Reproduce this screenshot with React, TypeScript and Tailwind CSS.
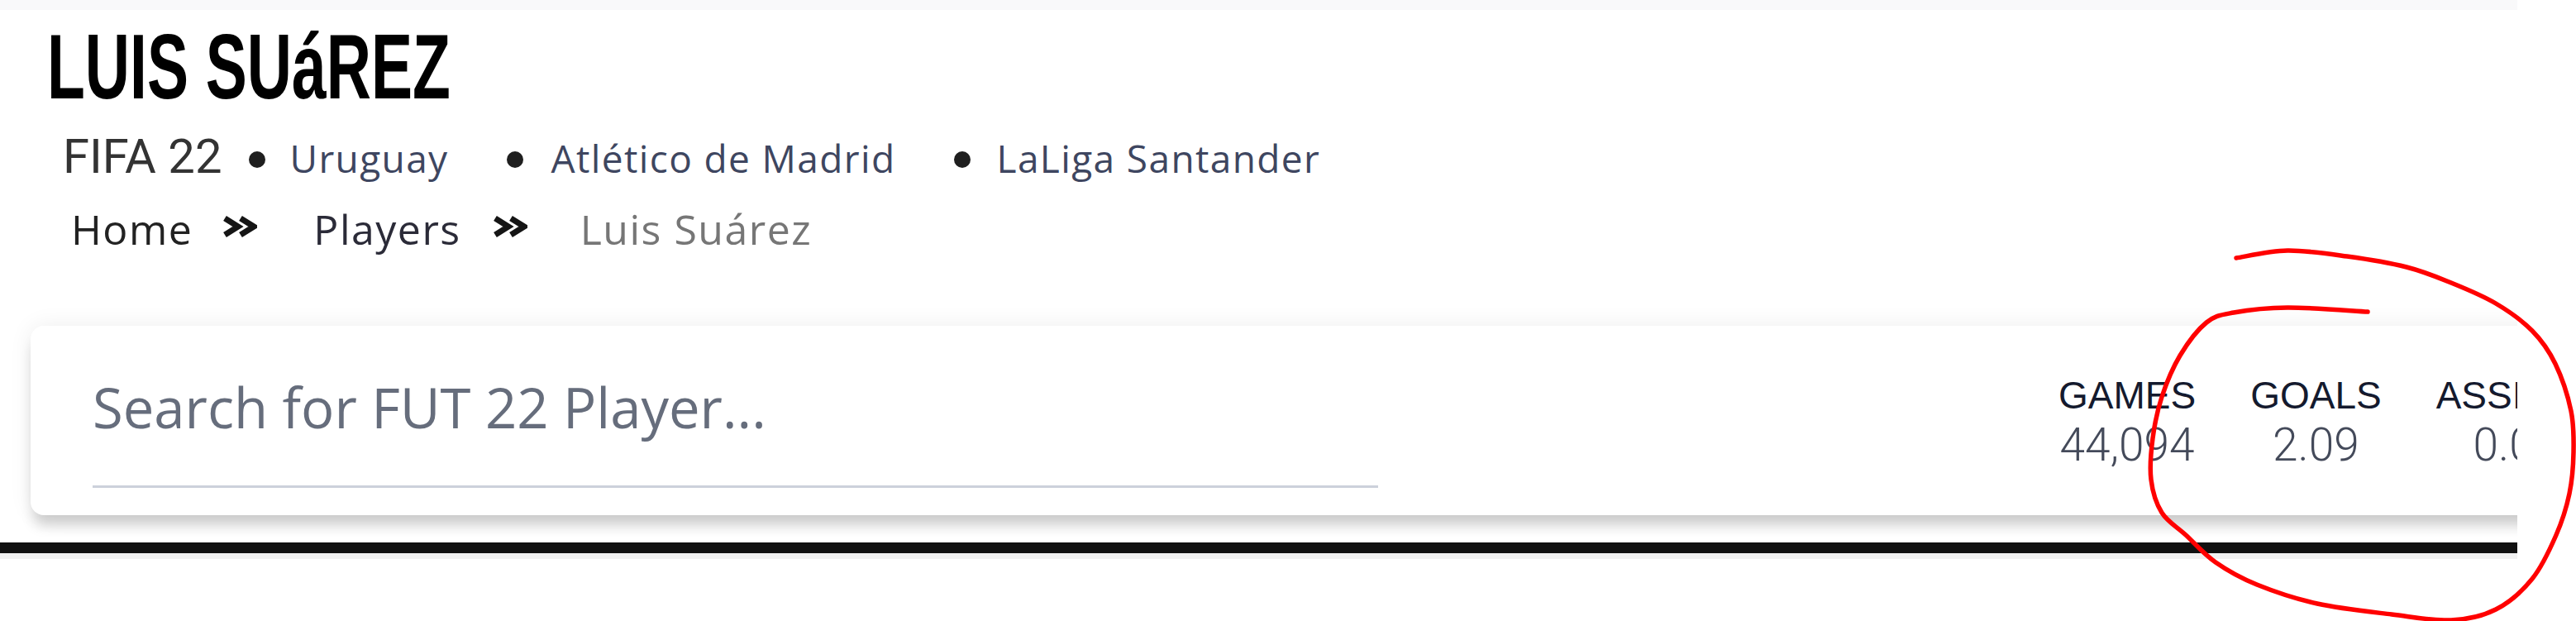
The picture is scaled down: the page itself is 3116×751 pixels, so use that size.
import React from "react"

const circle: [number, number][] = [
  [2705, 312], [2767, 303], [2839, 310], [2911, 323], [2965, 342], [3019, 367],
  [3063, 400], [3091, 440], [3110, 497], [3113, 547], [3108, 597], [3092, 647],
  [3063, 700], [3019, 737], [2965, 750], [2893, 743], [2803, 730], [2730, 707],
  [2680, 680], [2644, 647], [2615, 620], [2602, 580], [2604, 530], [2615, 480],
  [2637, 430], [2669, 390], [2702, 378], [2767, 372], [2864, 377],
]

// catmull-rom -> cubic bezier so the hand drawn stroke stays smooth
function smoothPath(p: [number, number][]) {
  let d = `M${p[0][0]} ${p[0][1]}`
  for (let i = 0; i < p.length - 1; i++) {
    const p0 = p[i - 1] || p[i]
    const p1 = p[i]
    const p2 = p[i + 1]
    const p3 = p[i + 2] || p2
    const c1x = p1[0] + (p2[0] - p0[0]) / 6
    const c1y = p1[1] + (p2[1] - p0[1]) / 6
    const c2x = p2[0] - (p3[0] - p1[0]) / 6
    const c2y = p2[1] - (p3[1] - p1[1]) / 6
    d += ` C${c1x.toFixed(1)} ${c1y.toFixed(1)} ${c2x.toFixed(1)} ${c2y.toFixed(1)} ${p2[0]} ${p2[1]}`
  }
  return d
}

function Chevrons() {
  return (
    <svg width="42" height="26" viewBox="0 0 42 26" className="mb-[6px] shrink-0">
      <path d="M3 3 L19 13 L3 23" fill="none" stroke="#151515" strokeWidth="7" strokeLinejoin="miter" />
      <path d="M22 3 L38 13 L22 23" fill="none" stroke="#151515" strokeWidth="7" strokeLinejoin="miter" />
    </svg>
  )
}

function Bullet({ first }: { first?: boolean }) {
  return (
    <span
      className={
        first
          ? "ml-[32px] w-[20px] h-[20px] rounded-full bg-[#1f1f1f] -translate-y-[6px] shrink-0"
          : "ml-[70px] w-[20px] h-[20px] rounded-full bg-[#1f1f1f] -translate-y-[6px] shrink-0"
      }
    />
  )
}

const stats = [
  { label: "GAMES", value: "44,094" },
  { label: "GOALS", value: "2.09" },
  { label: "ASSISTS", value: "0.06" },
  { label: "CARDS", value: "0.12" },
]

export default function App() {
  return (
    <div className="relative w-[3116px] h-[751px] bg-white overflow-hidden">
      <div className="w-[3045px] overflow-hidden bg-white">
        {/* top strip */}
        <div className="h-[12px] bg-[#f9f9fa]" />

        {/* Title */}
        <div className="pl-[57px] mt-[13px]">
          <h1 className="inline-block origin-left scale-x-[0.67] text-[112px] leading-[112px] font-bold text-black font-['Liberation_Sans_Narrow','Liberation_Sans',sans-serif]">
            LUIS SUáREZ
          </h1>
        </div>

        {/* Meta line */}
        <div className="flex items-baseline pl-[76px] mt-[23px] whitespace-nowrap">
          <span className="text-[58px] leading-none text-[#333333] font-['Roboto',sans-serif]">FIFA 22</span>
          <Bullet first />
          <span className="ml-[30px] text-[46px] leading-none tracking-[0.03em] text-[#3e4660] font-['Open_Sans',sans-serif]">Uruguay</span>
          <Bullet />
          <span className="ml-[34px] text-[46px] leading-none tracking-[0.03em] text-[#3e4660] font-['Open_Sans',sans-serif]">Atlético de Madrid</span>
          <Bullet />
          <span className="ml-[32px] text-[46px] leading-none tracking-[0.03em] text-[#3e4660] font-['Open_Sans',sans-serif]">LaLiga Santander</span>
        </div>

        {/* Breadcrumbs */}
        <div className="flex items-center pl-[86px] mt-[34px] whitespace-nowrap font-['Open_Sans',sans-serif] text-[50px] leading-none tracking-[0.03em]">
          <span className="text-[#222222]">Home</span>
          <span className="ml-[36px] flex"><Chevrons /></span>
          <span className="ml-[68px] text-[#2b2b38]">Players</span>
          <span className="ml-[38px] flex"><Chevrons /></span>
          <span className="ml-[64px] text-[#767676]">Luis Suárez</span>
        </div>

        {/* Search card */}
        <div className="pl-[37px] mt-[92px] pb-[28px]">
          <div className="flex w-[3300px] h-[229px] rounded-[16px] bg-white pl-[75px] shadow-[0_16px_16px_-4px_rgba(0,0,0,0.18),0_0_28px_rgba(0,0,0,0.07)]">
            <div className="w-[1555px] shrink-0 pt-[65px]">
              <div className="text-[67px] leading-none text-[#666d7c] font-['Open_Sans',sans-serif] whitespace-nowrap">
                Search for FUT 22 Player...
              </div>
              <div className="mt-[61px] h-[3px] bg-[#ccd1db]" />
            </div>
            <div className="ml-[823px] pt-[61px] flex gap-[66px] whitespace-nowrap">
              {stats.map((s) => (
                <div key={s.label} className="flex flex-col items-center">
                  <span className="text-[46px] leading-[46px] text-[#141a2e] font-['Liberation_Sans',Arial,sans-serif]">
                    {s.label}
                  </span>
                  <span className="mt-[10px] text-[55px] leading-[54px] font-light text-[#444a5a] font-['Roboto',sans-serif]">
                    {s.value}
                  </span>
                </div>
              ))}
            </div>
          </div>
        </div>

        {/* divider */}
        <div className="h-[5px] bg-white" />
        <div className="h-[13px] bg-[#111111]" />
        <div className="h-[7px] bg-[#f1f1f1]" />
      </div>

      {/* red annotation */}
      <svg className="absolute left-0 top-0 pointer-events-none" width="3116" height="751" viewBox="0 0 3116 751">
        <path d={smoothPath(circle)} fill="none" stroke="#ff0000" strokeWidth="5.5" strokeLinecap="round" strokeLinejoin="round" />
      </svg>
    </div>
  )
}
